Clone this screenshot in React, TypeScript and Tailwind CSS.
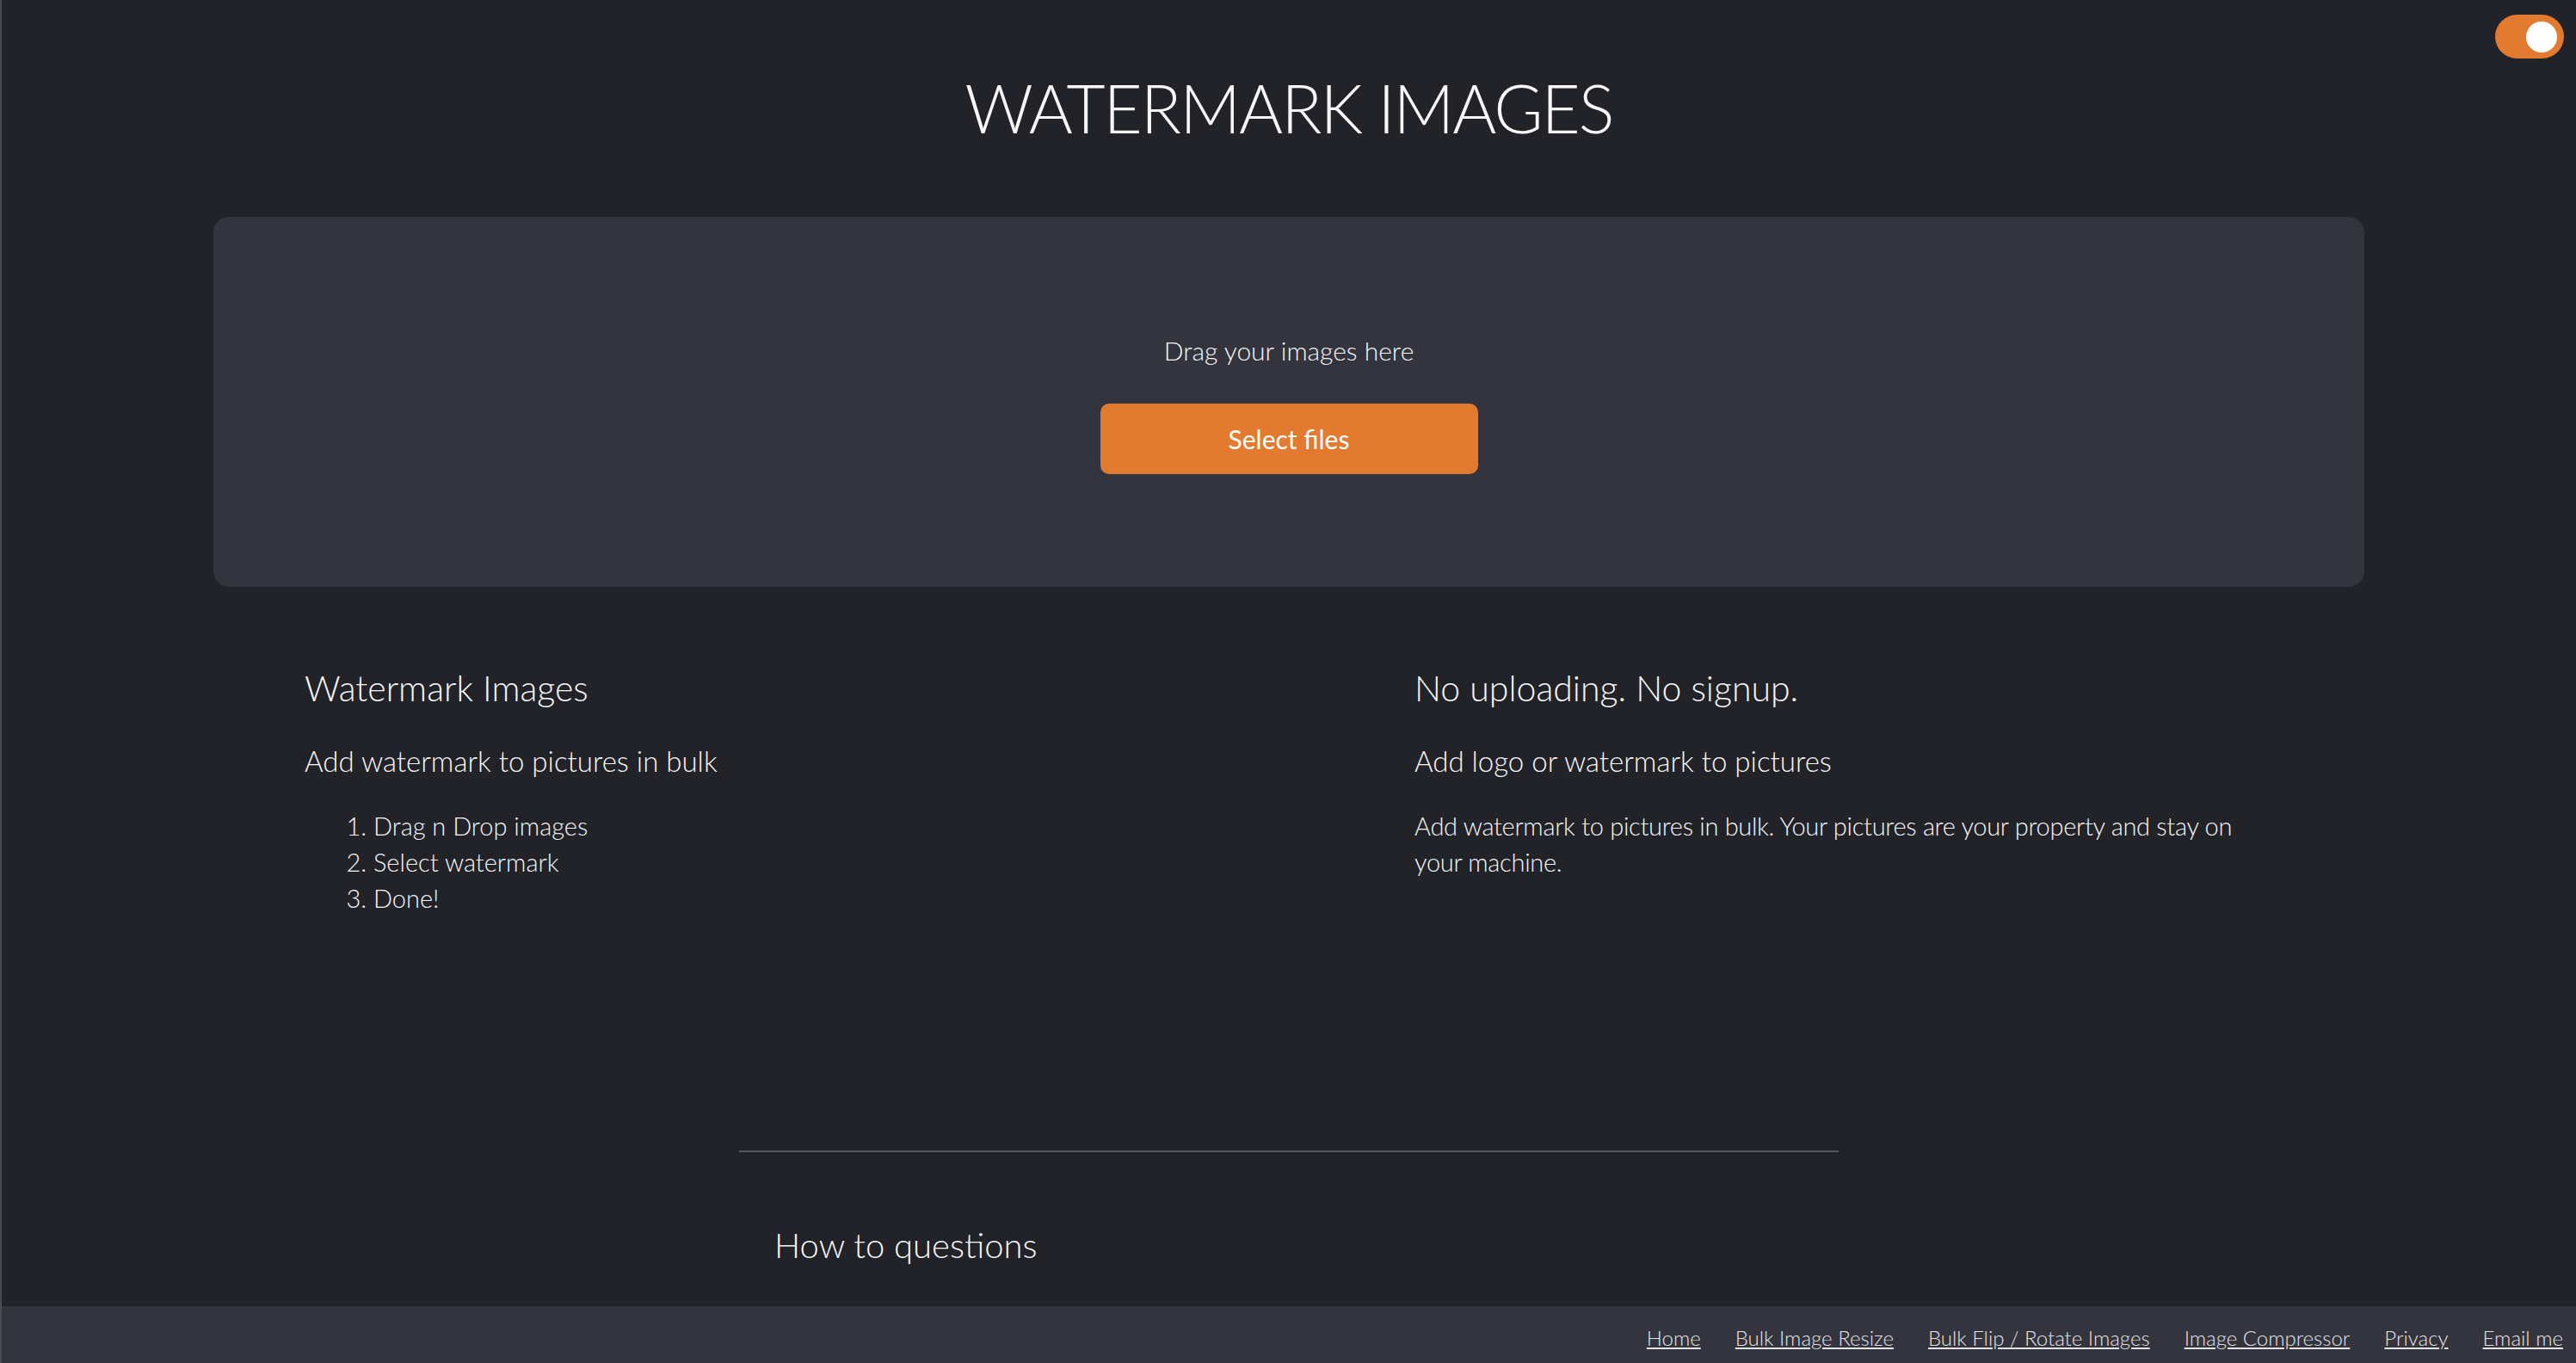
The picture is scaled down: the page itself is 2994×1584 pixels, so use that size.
import React from 'react';

const footerLinks = [
  'Home',
  'Bulk Image Resize',
  'Bulk Flip / Rotate Images',
  'Image Compressor',
  'Privacy',
  'Email me',
];

function App() {
  return (
    <div
      className="relative min-h-screen flex flex-col bg-[#222329] text-[#f7f7f7] border-l-2 border-[#4a4b51] font-light"
      style={{ fontFamily: 'Lato, "Open Sans", sans-serif' }}
    >
      {/* Theme toggle */}
      <div className="absolute top-[17px] right-[14px] w-[80px] h-[51px] rounded-full bg-[#e27a30] flex items-center justify-end pr-[8px]">
        <div className="w-[36px] h-[36px] rounded-full bg-white" />
      </div>

      <main className="flex-1">
        <h1 className="mt-[86px] text-center text-[78px] leading-none font-light tracking-[-2px]">
          WATERMARK IMAGES
        </h1>

        {/* Drop zone */}
        <div className="mt-[88px] mx-auto w-[2500px] h-[430px] rounded-[18px] bg-[#33343e] flex flex-col items-center pt-[140px]">
          <p className="text-[30px] leading-none">Drag your images here</p>
          <button className="mt-[47px] w-[439px] h-[82px] rounded-[10px] bg-[#e27a30] text-white text-[30px] font-normal">
            Select files
          </button>
        </div>

        {/* Info columns */}
        <div className="mx-auto w-[2580px] grid grid-cols-2 pt-[97px]">
          <div className="px-[146px]">
            <h2 className="text-[41px] leading-none font-light">Watermark Images</h2>
            <h3 className="mt-[48px] text-[33px] leading-none font-light">
              Add watermark to pictures in bulk
            </h3>
            <ol className="mt-[38px] list-decimal pl-[80px] text-[29px] leading-[42px]">
              <li>Drag n Drop images</li>
              <li>Select watermark</li>
              <li>Done!</li>
            </ol>
          </div>
          <div className="px-[146px]">
            <h2 className="text-[41px] leading-none font-light">No uploading. No signup.</h2>
            <h3 className="mt-[48px] text-[33px] leading-none font-light">
              Add logo or watermark to pictures
            </h3>
            <p className="mt-[38px] text-[29px] leading-[42px] tracking-[-0.3px]">
              Add watermark to pictures in bulk. Your pictures are your property and stay on your
              machine.
            </p>
          </div>
        </div>

        {/* FAQ */}
        <div className="mx-auto w-[1278px] mt-[272px]">
          <hr className="border-0 h-[2px] bg-[#55565c]" />
          <h2 className="mt-[88px] pl-[41px] text-[40px] leading-none font-light">How to questions</h2>
        </div>
      </main>

      <footer className="h-[66px] bg-[#33343d] flex justify-end gap-[40px] pr-[15px] pt-[25px]">
        {footerLinks.map((l) => (
          <a key={l} href="#" className="text-[24px] leading-none text-[#e4e4e4] underline">
            {l}
          </a>
        ))}
      </footer>
    </div>
  );
}

export default App;
